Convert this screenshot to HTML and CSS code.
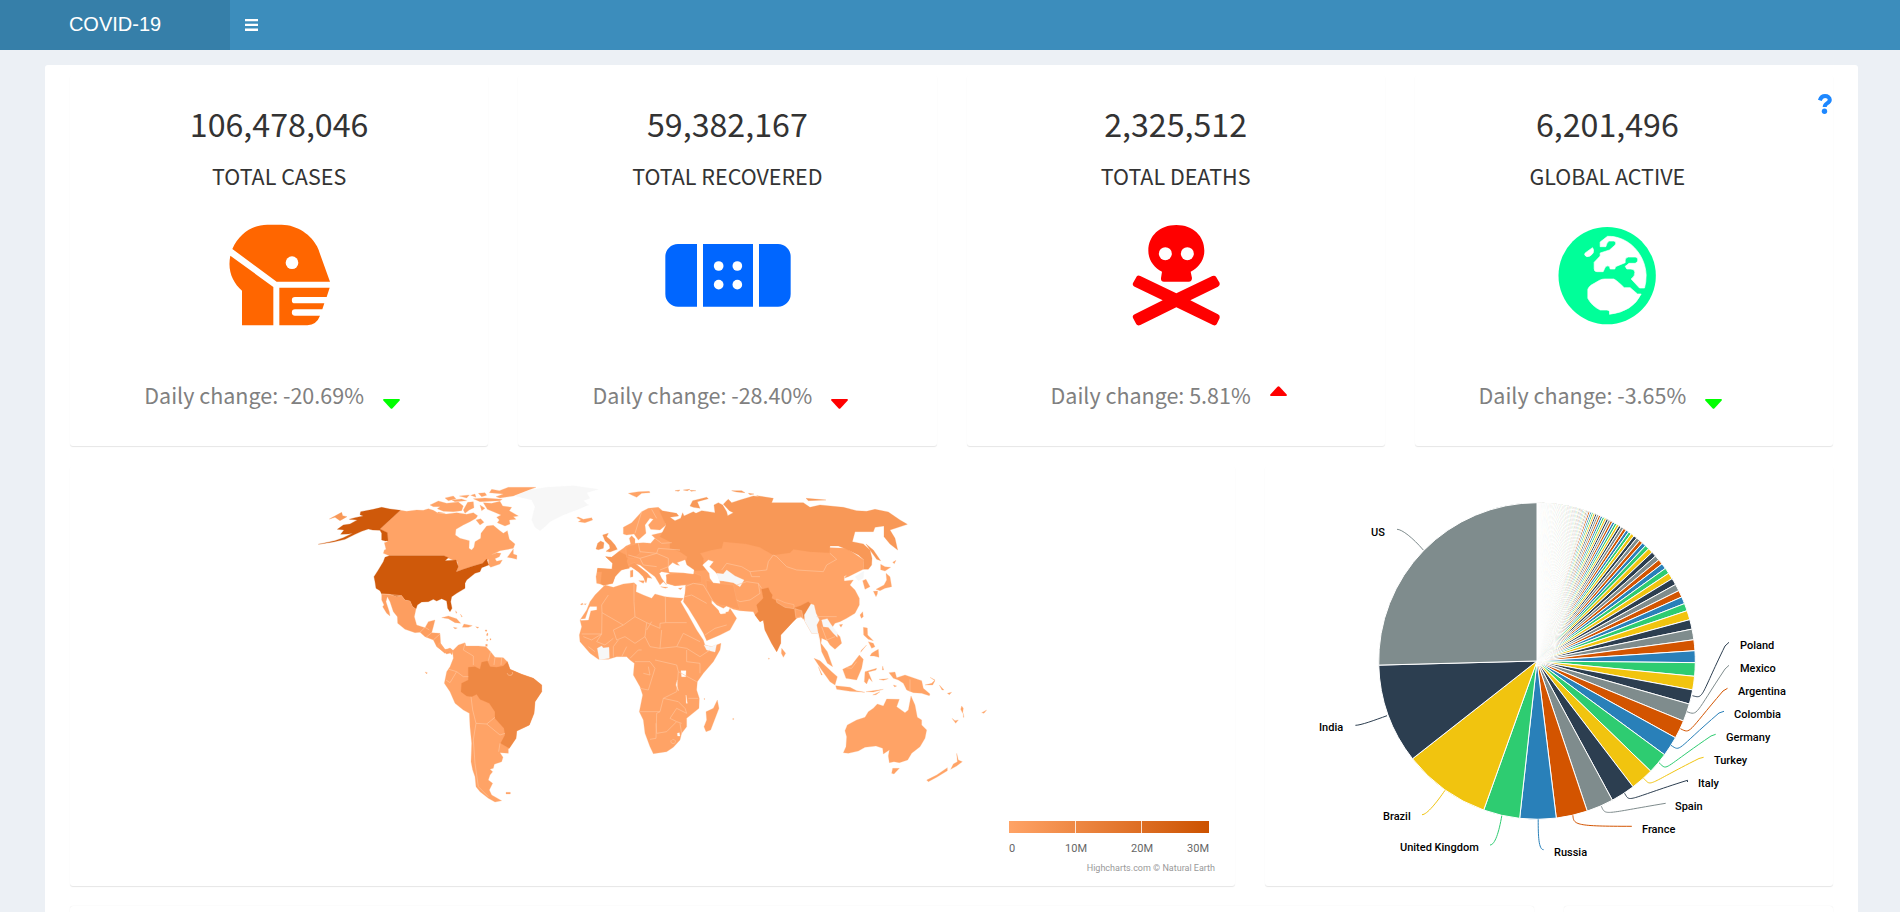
FILE: index.html
```html
<!DOCTYPE html>
<html lang="en">
<head>
<meta charset="utf-8">
<title>COVID-19</title>
<link rel="stylesheet" href="styles.css">
</head>
<body>
<header class="topbar">
  <div class="brand">COVID-19</div>
  <nav class="navbar"><svg class="menu" width="13" height="12" viewBox="0 0 13 12"><path d="M0 0h13v2.300H0zM0 4.800h13v2.300H0zM0 9.600h13v2.300H0z"/></svg></nav>
</header>
<main class="panel">
  <section class="stats">
    <article class="card stat">
      <div class="stat-body">
        <div class="value">106,478,046</div>
        <div class="label">TOTAL CASES</div>
        <svg class="icon" viewBox="645 634 384 384" fill="#f60">
          <path d="M697 748C718 702 756 676 802 675H845C892 675 936 708 951 740Q956 750 959 760L990 846H830z"/>
          <path d="M691 768L820 862V977H726V873C697 847 682 812 691 768z"/>
          <path d="M838 864H989L980 892H885a9.500 9.500 0 0 0 0 19H973L967 929H885a9.500 9.500 0 0 0 0 19H960Q950 975 922 977H838z"/>
          <circle cx="876" cy="789" r="19" fill="#fff"/>
        </svg>
        <div class="change">Daily change: -20.69%<svg class="caret down" viewBox="0 0 17 10" fill="#0f0"><path d="M1 0h15q1.500.5.5 1.700L9.500 9.300q-1 1-2 0L.5 1.700Q-.5.5 1 0z"/></svg></div>
      </div>
    </article>
    <article class="card stat">
      <div class="stat-body">
        <div class="value">59,382,167</div>
        <div class="label">TOTAL RECOVERED</div>
        <svg class="icon" viewBox="489 453 384 384" fill="#06f">
          <path d="M534 552h57v188h-57a38 38 0 0 1-38-38V590a38 38 0 0 1 38-38zM609 552h150v188H609zM777 552h57a38 38 0 0 1 38 38v112a38 38 0 0 1-38 38h-57z"/>
          <g fill="#fff"><circle cx="656" cy="618" r="14.500"/><circle cx="712" cy="618" r="14.500"/><circle cx="656" cy="674" r="14.500"/><circle cx="712" cy="674" r="14.500"/></g>
        </svg>
        <div class="change">Daily change: -28.40%<svg class="caret down" viewBox="0 0 17 10" fill="red"><path d="M1 0h15q1.500.5.5 1.700L9.500 9.300q-1 1-2 0L.5 1.700Q-.5.5 1 0z"/></svg></div>
      </div>
    </article>
    <article class="card stat">
      <div class="stat-body">
        <div class="value">2,325,512</div>
        <div class="label">TOTAL DEATHS</div>
        <svg class="icon" viewBox="455 453 384 384" fill="red">
          <path d="M648 495C698 495 732 528 732 572C732 600 716 622 691 635L695 654Q695 665 685 665H611Q601 665 602 654L605 635C580 622 564 600 564 572C564 528 598 495 648 495z"/>
          <path d="M530 648Q534 645 540 648L648 700L756 648Q763 645 767 650L778 669Q780 676 773 680L690 721L773 763Q780 767 778 774L769 793Q765 798 758 795L648 742L540 795Q532 798 528 793L518 774Q515 767 523 763L607 721L523 680Q515 676 518 669z"/>
          <g fill="#fff"><circle cx="615" cy="581" r="19.500"/><circle cx="681" cy="581" r="19.500"/></g>
        </svg>
        <div class="change">Daily change: 5.81%<svg class="caret up" viewBox="0 0 17 10" fill="red"><path d="M1 10h15q1.500-.5.5-1.700L9.500.7q-1-1-2 0L.5 8.300Q-.5 9.500 1 10z"/></svg></div>
      </div>
    </article>
    <article class="card stat">
      <div class="stat-body">
        <div class="value">6,201,496</div>
        <div class="label">GLOBAL ACTIVE</div>
        <svg class="icon" viewBox="428.500 453 384 384" fill="#0f9">
          <circle cx="621" cy="647" r="146"/>
          <path fill="#fff" stroke="#fff" stroke-width="2" stroke-linejoin="round" d="M613 657H641Q652 663 672 683H690L712 702H723Q698 755 628 763V755Q626 749 618 750H600Q575 738 563 715V688Q564 683 572 676L598 661Q606 657 613 657zM622 529C683 527 735 580 738 645Q738 667 733 684H718L693 657Q705 648 704 637Q703 627 690 627H680L675 619Q682 615 686 610H705Q713 608 713 600Q713 591 705 591H685Q676 592 675 600V608L646 620L644 627H630L628 619Q620 615 615 622L609 635H590Q582 635 582 626V607L600 588V579L628 570L645 555Q650 544 640 543H628Q620 545 617 560H600V546zM577 563Q582 568 579 579Q570 592 560 590Q550 586 555 579z"/>
        </svg>
        <div class="change">Daily change: -3.65%<svg class="caret down" viewBox="0 0 17 10" fill="#0f0"><path d="M1 0h15q1.500.5.5 1.700L9.500 9.300q-1 1-2 0L.5 1.700Q-.5.5 1 0z"/></svg></div>
      </div>
      <svg class="help" viewBox="0 0 14 20"><path d="M1.800 6.300C2.800 3.500 4.500 2.100 7 2.100c2.700 0 4.800 1.300 4.800 3.700 0 3.700-5.100 3-5.100 7.100" fill="none" stroke="#1e88ff" stroke-width="4"/><circle cx="6.500" cy="17.300" r="2.700" fill="#1e88ff"/></svg>
    </article>
  </section>
  <section class="charts">
    <article class="card">
      <svg class="chart" viewBox="70 466 1165 420">
        <defs><linearGradient id="scale"><stop offset="0" stop-color="#ffa366"/><stop offset="1" stop-color="#cc5200"/></linearGradient></defs>
        <!-- North America -->
        <g class="land" transform="translate(300 470) scale(.33333)">
          <path d="M301 121L320 124 350 120 370 121 385 116 400 121 415 130 440 132 470 128 500 133 520 128 533 137 528 145 510 155 490 165 468 178 466 195 480 205 508 212 507 235 515 240 522 232 525 215 542 205 543 190 560 168 580 166 597 180 610 190 622 182 628 208 645 222 640 235 600 242 575 254 590 248 603 250 598 260 585 266 590 274 607 270 600 282 572 292 566 285 565 268 548 280 520 288 490 298 468 306 475 290 472 275 445 265 432 257 268 257 250 250 253 240 258 238 253 218 262 215 262 190 240 177z"/>
          <path d="M708 52L625 52 598 62 575 58 568 68 610 72 588 80 600 84 640 78zM550 98L575 100 600 94 608 108 635 112 628 122 655 138 640 140 648 148 628 150 630 162 615 168 592 158 598 150 590 142 603 135 580 125 562 118zM390 105L415 93 440 100 475 96 490 108 485 122 460 125 430 124 412 116 420 110 400 110zM435 84L460 78 468 86 445 92zM478 78L508 75 500 84zM520 86L555 84 607 88 600 92 540 95zM503 97L520 95 522 113 508 120 495 130 490 120zM535 70L555 68 560 76 545 80zM455 90L485 87 500 92 465 95zM528 150L542 146 552 157 540 165zM622 262L640 237 640 252 651 256 650 268 635 264zM415 126L435 130 410 131zM540 105L555 115 545 122zM512 76L525 72 528 82z"/>
          <path class="us" d="M301 121L270 117 245 112 220 118 182 125 180 134 190 138 165 143 148 148 172 150 150 162 130 165 112 178 132 180 122 193 145 192 158 190 130 203 105 212 78 218 55 223 100 216 135 208 165 193 185 184 205 177 218 180 240 181 245 190 245 210 256 213 264 212 262 188 240 177z"/>
          <path class="us" d="M268 257L432 257 445 263 435 272 468 270 475 290 468 306 490 298 520 288 548 280 560 267 566 285 545 293 540 305 525 310 500 330 495 340 495 355 470 370 455 380 452 395 456 415 450 425 443 415 440 393 425 386 410 393 400 388 385 395 365 396 352 405 348 417 338 410 330 393 315 390 305 377 290 380 265 372 245 372 240 362 228 355 225 335 222 320 235 300 250 275 255 262z"/>
          <path class="mid" d="M88 147L125 127 128 137 141 140 120 152 105 142z"/>
          <path class="low" d="M245 372L265 372 290 380 305 377 315 390 330 393 338 410 348 417 343 440 350 465 375 473 385 455 405 450 400 470 395 488 420 490 422 520 435 538 452 536 460 543 455 548 440 552 410 530 400 510 375 500 360 487 345 488 315 478 293 460 292 440 280 425 270 395 262 380 258 395 268 425 270 438 260 430 248 410 252 405 245 390z"/>
          <path d="M425 443L445 438 470 446 482 460 465 458 445 446zM492 462L517 467 505 472 487 472zM460 472L472 474 465 477zM527 470L537 472 532 475zM467 422l4 6-3 2zM481 432l6 8-2 1zM556 480h4v3h-4zM560 492h3v5h-3zM560 508h3v4h-3zM557 523h5v6h-5zM830 143L835 141 850 148 875 143 878 150 855 158 835 155 843 150z"/>
          <path class="none" d="M645 78L690 60 740 52 820 47 895 58 860 68 870 85 850 92 865 105 835 118 790 135 770 145 750 155 735 170 720 182 705 172 695 150 700 130 705 110 695 90z"/>
          <path class="edge" d="M360 487L375 472 388 480M395 488L378 502M400 510L420 492M245 372L305 377"/>
        </g>
        <!-- South America and Africa -->
        <g class="land" transform="translate(400 630) scale(.33333)">
          <path d="M118 38L135 60 150 54 160 62 156 75 145 62 134 70 112 50z"/>
          <path d="M158 62L175 45 195 38 198 48 235 48 258 50 272 65 285 82 310 83 322 95 330 118 365 133 400 145 425 165 425 185 405 215 402 250 388 285 350 303 348 325 325 358 325 370 300 368 309 382 305 395 283 403 280 415 270 418 278 425 270 435 265 450 278 460 268 480 275 495 305 512 285 516 265 505 240 485 228 470 225 440 218 420 213 395 215 340 210 290 208 250 190 240 165 220 150 185 133 160 140 125 150 110 160 85z"/>
          <path class="high" d="M322 95L330 118 365 133 400 145 425 165 425 185 405 215 402 250 388 285 350 303 348 325 328 355 302 340 315 315 312 295 285 265 285 245 268 220 240 208 230 193 215 200 200 198 183 185 185 160 205 150 205 112 225 110 240 118 245 97 262 93 270 110 290 112 310 108z"/>
          <path class="edge" d="M195 40L190 60 220 78 220 105M272 65L265 92M285 82L282 105M305 84L303 105M147 118L170 125 190 140 205 140M170 125L150 158 138 150M213 200L218 240 228 280 260 282 285 262M260 282L300 315 315 310M228 280L220 330 225 400 235 470 265 500M300 340L296 365M322 130a8 6 0 1 0 14-4"/>
          <path d="M318 487h13v5h-13zM75 126l7 2-2 4zM257 0h3v4h-3zM261 10h3v4h-3zM270 26h3v4h-3z"/>
          <path d="M615 -135L640 -128 670 -138 702 -142 710 -135 708 -115 730 -105 755 -95 765 -108 795 -100 825 -97 850 -95 842 -85 865 -45 890 0 910 30 915 45 935 50 963 40 960 60 940 95 910 130 892 155 890 180 898 205 897 235 860 265 860 290 845 310 840 330 820 352 800 365 760 371 750 350 735 310 730 270 718 245 728 195 720 170 700 135 703 100 690 90 680 80 650 80 625 88 595 88 570 70 540 35 538 15 545 -10 540 -30 560 -60 570 -85 585 -105z"/>
          <path class="none" d="M592 55L605 48 610 54 627 52 628 85 598 89z"/>
          <path class="none" d="M912 45L935 50 950 42 945 66 920 60z"/>
          <path class="sea" d="M566 -62L570 -70 590 -70 590 -61 572 -58 565 -30 542 -29 542 -32 556 -34zM843 122L858 122 857 140 845 140zM832 150L828 165 835 182 832 170zM858 195L862 220 859 220zM832 310L838 308 840 318 833 318z"/>
          <path class="edge" d="M625 -105L605 -75 606 -52 670 -15 705 -40 702 -85 702 -140M606 -52L605 12 545 12M705 -40L740 -22 780 -5 780 -20 797 -22 796 -100M797 -22L860 -22M740 -22L735 20 705 40 675 20 650 30 640 0 670 -15M735 20L750 50 780 55 830 50 860 55 900 80 930 60M780 55L785 0M640 80L640 50 655 30M690 85L715 60 725 60M565 50L585 65M605 12L590 35 615 45 640 25M605 12L575 30 550 20M830 50L850 10 900 35M705 95L750 95 765 115 745 180 720 175M765 90L830 105 835 125 830 185 790 205 780 245 720 245M835 125L890 155M860 60L860 95 900 100 900 130M780 245L770 250 768 325 750 328M768 280L770 310 800 305 830 275 845 280M790 205L835 215 855 235 860 250 830 235 810 265 830 275M865 205L895 205M840 280L845 310M730 130L750 135 745 110M815 330a7 6 0 1 0 2-1M740 0L755 -25M680 50L665 80"/>
          <path d="M952 210L957 235 932 300 918 305 912 290 920 270 918 245 940 235zM997 267l4-2v4zM912 205l3 2-2 2zM542 -78l6-2 2 3-7 2zM552 -78l7-1-2 3z"/>
        </g>
        <!-- Eurasia -->
        <g class="land" transform="translate(560 470) scale(.33333)">
          <path d="M110 340L108 320 113 295 155 297 158 280 137 260 155 262 175 245 190 235 198 228 212 222 208 205 215 197 225 207 225 220 250 218 272 220 285 205 275 195 310 187 600 225 860 235 912 270 910 298 895 305 865 320 852 325 860 315 852 320 853 333 880 330 870 345 885 360 898 385 898 405 885 430 860 445 840 455 825 460 815 475 840 500 845 520 825 538 810 525 802 512 785 505 783 520 802 545 818 590 802 580 785 545 780 510 775 490 755 490 735 455 730 440 705 445 690 465 662 495 662 520 650 545 635 520 615 480 610 450 600 455 585 435 580 425 540 422 520 418 500 408 490 415 470 405 455 390 455 400 475 420 480 430 505 425 510 415 530 445 510 480 480 495 440 512 430 490 410 455 385 415 370 395 375 370 377 345 345 347 320 340 320 325 318 315 330 310 305 305 298 310 305 325 320 345 310 335 300 345 285 320 265 305 240 285 228 283 262 310 275 325 262 322 258 338 250 320 235 305 215 290 185 300 165 320 158 340 130 346 120 342z"/>
          <path d="M190 192L190 172 215 158 245 125 265 115 295 112 305 120 318 165 300 180 272 178 265 165 280 148 270 145 255 165 258 190 235 210 222 192 200 195z"/>
          <path class="mid" d="M298 121L350 130 356 138 330 142 345 152 362 145 368 128 372 138 400 125 408 130 425 122 465 128 462 105 475 98 488 105 500 125 503 137 520 128 508 122 490 103 500 92 505 88 515 98 540 90 580 78 600 80 590 77 640 85 635 98 730 98 750 112 780 105 850 112 890 122 920 124 945 118 985 126 1020 150 1042 163 1015 172 990 180 1005 205 1013 240 990 222 972 200 972 168 945 172 940 185 885 185 877 215 910 222 930 240 936 265 935 285 925 298 910 298 912 270 895 255 860 238 835 228 810 228 808 248 750 245 700 238 690 248 640 255 600 232 560 222 540 220 490 215 485 235 455 240 420 250 430 265 430 285 438 300 400 303 375 285 382 260 360 245 330 235 330 215 300 200 308 185 318 165z"/>
          <path class="mid" d="M390 108L398 92 440 82 445 86 412 95 420 115 400 112zM515 62L545 62 555 68 530 66zM565 70L582 72 570 74zM345 62l15-2-5 4zM370 60l20-2-8 4zM390 61l18 1-15 2zM738 85L775 88 798 90 745 92zM918 222L940 240 962 272 950 268 930 240z"/>
          <path d="M205 70L235 65 268 64 270 68 245 70 230 82 215 75zM998 277l10-6-5 10z"/>
          <path class="mid" d="M128 195L145 190 140 200 152 210 165 225 172 238 150 246 138 244 150 235 148 225 135 212zM108 237L113 220 122 213 132 218 130 235 115 239zM137 260L155 262 178 245 204 258 200 275 208 295 180 300 158 297 158 280zM113 295L180 300 165 320 158 340 130 346 122 340 126 305 112 305z"/>
          <path class="low" d="M198 235L205 228 235 220 240 250 220 265 200 262zM205 285L225 277 228 283 262 310 275 325 262 322 258 338 250 320 235 305zM320 315L345 310 400 308 425 318 425 338 345 347 320 340zM438 330L470 340 520 345 530 390 540 420 500 408 480 405 455 390 440 355z"/>
          <path class="sea" d="M328 306L325 290 338 278 350 285 360 287 352 278 375 270 380 285 402 300 400 312 370 308zM428 285L445 270 460 275 448 290 465 305 475 318 480 340 460 338 450 325 448 310z"/>
          <path class="none" d="M470 310L490 312 500 300 525 318 552 330 540 350 520 338 490 333 478 332z"/>
          <path d="M236 332l18 0-4 8zM211 302l8-2 0 20-8 2zM302 350l22 2-8 3zM355 355l12-2-6 6z"/>
          <path class="high" d="M605 358L625 353 630 365 637 375 635 385 650 393 675 408 702 414 722 407 745 395 753 403 740 422 735 440 730 448 725 425 705 415 710 445 690 465 662 495 662 520 650 545 635 520 615 480 610 450 600 455 585 435 595 425 590 405 610 385z"/>
          <path class="border" d="M650 387L675 398 702 404 702 416 675 412 650 397zM704 416L725 422 730 447 722 440 708 445z"/>
          <path class="none" d="M753 402L762 405 768 430 778 450 770 465 778 510 772 490 755 490 735 455 733 435zM785 450L802 446 812 462 832 488 832 502 820 490 805 472 790 470zM885 320L912 303 910 325 895 332z"/>
          <path class="sea" d="M478 425L495 420 497 430 482 432z"/>
          <path d="M908 332L918 328 930 350 915 358zM978 310L990 320 995 350 975 355 960 362 948 358 972 345 980 330zM962 283L975 290 992 292 975 303 962 299zM940 364L953 363 952 372 948 380zM908 425L910 440 904 445 900 435zM838 464L848 463 843 472zM665 535L677 550 670 562 664 550zM910 472L922 474 923 495 940 512 925 508 911 495zM925 515L940 520 945 530 935 535zM942 545L955 538 957 562 942 558 930 558 935 550zM920 525l-18 22 2-6zM625 564l4 2-3 2z"/>
          <path class="edge" d="M640 255L625 275 620 300 570 305 545 290 500 280 485 300M640 255L650 260 680 290 710 300 790 305 800 285 830 268 810 250M570 305L575 320 600 320M530 345L560 335 595 340 605 355M595 340L600 370 570 390 540 395 530 390M235 220L240 245 290 250M285 205L305 220 335 218M290 250L295 235 360 240M290 250L325 265 325 290 300 300M205 255L240 265 290 250M240 265L250 285 290 290M245 125L225 190M275 118L290 145M375 350L400 340 430 345 460 395M375 380L395 375 440 400M435 495L465 475 500 465M770 440L830 440M785 470L800 510 825 500"/>
        </g>
        <!-- Oceania -->
        <g class="land" transform="translate(740 630) scale(.33333)">
          <path d="M222 85L240 92 275 125 292 140 285 165 270 155 245 120zM287 167L330 172 350 182 375 187 330 184 290 178zM308 118L335 105 358 75 370 88 365 115 350 150 318 145zM375 125L410 115 408 120 385 126 397 155 387 145 380 162 373 155zM447 128L465 126 470 143 495 135 545 152 550 175 570 192 568 197 545 190 520 188 500 180 490 160 475 150 460 145zM378 185L430 178 400 186zM398 195L420 185 408 194zM417 148L445 146 430 151zM428 108l3 12 -4 0zM555 165L575 160 585 150 570 142 585 152 578 165zM598 165L612 180 606 180zM622 190L635 187 628 194zM665 228L670 235 668 250 662 238zM670 250l2 12-2 0zM636 265L645 272 655 270 647 280zM725 248L740 240 732 250zM235 110l12 25-3 0zM460 165l10 3-6 3z"/>
          <path d="M310 368L318 350 320 320 315 302 322 285 350 270 375 262 385 245 400 235 412 222 430 228 440 207 478 208 470 230 495 248 505 240 513 198 525 225 532 262 545 270 545 285 560 300 555 325 540 350 515 370 503 390 478 398 462 395 448 398 445 378 448 360 430 372 428 355 408 348 375 352 355 363 325 370zM458 415L478 415 462 432 455 430zM650 370L655 390 667 395 650 408 632 418 640 402 652 395zM560 450L590 435 622 413 622 422 590 442 565 455z"/>
          <path class="edge" d="M510 148V185M318 113L335 115 350 95"/>
        </g>
        <rect x="1009" y="821" width="200" height="12" fill="url(#scale)"/>
        <path d="M1075.500 821v12M1141.500 821v12" stroke="#fff" stroke-opacity=".8"/>
        <g class="axis">
          <text x="1009" y="852">0</text>
          <text x="1076" y="852" text-anchor="middle">10M</text>
          <text x="1142" y="852" text-anchor="middle">20M</text>
          <text x="1209" y="852" text-anchor="end">30M</text>
        </g>
        <text class="credit" x="1215" y="871" text-anchor="end">Highcharts.com © Natural Earth</text>
      </svg>
    </article>
    <article class="card">
      <svg class="chart" viewBox="1265 466 568 420">
        <g id="slices" class="slices"></g>
        <g class="links">
          <path stroke="#7f8c8d" d="M1397 529.300C1402 529.300 1413 538 1423.300 550"/>
          <path stroke="#2c3e50" d="M1355.400 725.300C1361 725.300 1375 720 1387 715.700"/>
          <path stroke="#f1c40f" d="M1422 814.700C1427 814.700 1437 802 1445 790.300"/>
          <path stroke="#2ecc71" d="M1490 845C1495 845 1499 832 1501.800 815.700"/>
          <path stroke="#2980b9" d="M1543.600 849.700C1538.600 849.700 1538.200 836 1538.200 819.300"/>
          <path stroke="#d35400" d="M1572.900 815.300C1573.500 825 1576 826.300 1631.800 826.300"/>
          <path stroke="#7f8c8d" d="M1601.400 806.300C1605.500 816 1604 813.500 1665.700 803.300"/>
          <path stroke="#2c3e50" d="M1624.600 793.300C1630 802.500 1626 800 1682 782L1687.500 780.300V782"/>
          <path stroke="#f1c40f" d="M1643.600 778.300C1652 787 1646 785 1699 758.500L1703.600 757.300"/>
          <path stroke="#2ecc71" d="M1659 762.700C1668 771 1661 770 1711 736L1715.700 734.300"/>
          <path stroke="#2980b9" d="M1671 745.300C1681 752 1676 750 1719 713L1724 711.300"/>
          <path stroke="#d35400" d="M1680.400 728.700C1691 734 1687 733 1723 691L1727.500 688.300"/>
          <path stroke="#7f8c8d" d="M1687 711.700C1698 716 1695 714 1725 669L1729 665.300"/>
          <path stroke="#2c3e50" d="M1692.500 695.700C1704 699 1700 697 1725 646L1729 642.300"/>
        </g>
        <g class="names">
          <text x="1371" y="536">US</text><text x="1319" y="731">India</text><text x="1383" y="820">Brazil</text><text x="1400" y="851">United Kingdom</text><text x="1554" y="856">Russia</text><text x="1642" y="833">France</text><text x="1675" y="810">Spain</text><text x="1698" y="787">Italy</text><text x="1714" y="764">Turkey</text><text x="1726" y="741">Germany</text><text x="1734" y="718">Colombia</text><text x="1738" y="695">Argentina</text><text x="1740" y="672">Mexico</text><text x="1740" y="649">Poland</text>
        </g>
      </svg>
    </article>
  </section>
  <section class="tables"><article class="card"></article><article class="card"></article></section>
</main>
<script src="pie.js"></script>
</body>
</html>
```
FILE: styles.css
```css
* { box-sizing: border-box; }
body { display: flex; flex-direction: column; height: 100vh; margin: 0; background: #ecf0f5; overflow: hidden; font-family: "Noto Sans CJK SC", "Noto Sans", sans-serif; color: #333; }
.topbar { display: flex; flex: none; height: 50px; background: #3c8dbc; color: #fff; }
.brand { width: 230px; background: #367fa9; font: 20px/49px "Liberation Sans", Arial, sans-serif; text-align: center; }
.navbar { display: flex; align-items: center; padding-left: 15px; }
.menu { fill: #fff; }
.panel { flex: 1; min-height: 0; margin: 15px 42px 0 45px; padding: 10px 25px 0; background: #fff; border-radius: 3px 3px 0 0; overflow: hidden; }
.card { background: #fff; border-radius: 3px; box-shadow: 0 1px 1px rgba(0, 0, 0, .1); min-width: 0; }
.stats { display: grid; grid-template-columns: repeat(4, 1fr); gap: 30px; }
.stat { display: flex; height: 371px; }
.stat-body { flex: 1; display: flex; flex-direction: column; align-items: center; padding-top: 28px; }
.value { font-size: 32.2px; line-height: 40px; }
.label { margin-top: 18px; font-size: 21.5px; line-height: 30px; }
.icon { width: 128px; height: 128px; margin-top: 20px; }
.change { display: flex; margin-top: 41px; padding-right: 14px; font-size: 21.5px; line-height: 30px; color: #808080; }
.caret { width: 17px; height: 10px; margin-left: 19px; }
.caret.down { margin-top: 19px; }
.caret.up { margin-top: 6px; }
.help { width: 14px; height: 20px; margin: 19px 1px 0 18px; }
.charts { display: grid; grid-template-columns: 1165px 1fr; gap: 30px; margin-top: 20px; }
.chart { display: block; width: 100%; height: 420px; font-family: Roboto, sans-serif; }
.land { fill: #ffa366; stroke: #ffb585; stroke-width: .8; }
.land .us { fill: #cf590a; stroke: #cf590a; }
.land .high { fill: #ee8843; stroke: #ee8843; }
.land .mid { fill: #f89857; stroke: #f89857; }
.land .low { fill: #fd9e60; stroke: #ffb585; }
.land .border { stroke: #ffc49c; stroke-width: 1.5; }
.land .none { fill: #f7f7f7; stroke: #f7f7f7; }
.land .sea { fill: #fff; stroke: #fff; }
.land .edge { fill: none; stroke: #ffc49c; stroke-width: 2; }
.axis { font-size: 11px; fill: #666; }
.credit { font-size: 9px; fill: #999; }
.slices path { stroke: #fff; stroke-width: 1; stroke-linejoin: round; }
.links { fill: none; stroke-width: 1; }
.names { font-size: 11px; font-weight: 500; fill: #000; }
.tables { display: grid; grid-template-columns: 1464px 1fr; gap: 30px; margin-top: 20px; }
.tables .card { height: 24px; box-shadow: 0 0 1px rgba(0, 0, 0, .12); }
```
FILE: pie.js
```js
// Confirmed cases in millions, largest first; the remaining countries form a shrinking tail.
const cases = [27.06, 10.84, 9.52, 3.96, 3.93, 3.4, 2.94, 2.64, 2.53, 2.3, 2.16, 1.98, 1.93, 1.55, 1.476, 1.466,
  1.28, 1.18, 1.157, 1.04, 1, 0.81, 0.765, 0.75, 0.745, 0.725, 0.69, 0.627, 0.6, 0.555, 0.538, 0.538, 0.53, 0.475,
  0.425, 0.41, 0.405, 0.375, 0.37, 0.335, 0.33, 0.327, 0.318, 0.27, 0.26, 0.26, 0.26, 0.256, 0.245, 0.235, 0.231,
  0.228, 0.224, 0.223, 0.217, 0.203, 0.2, 0.196, 0.19, 0.187];
const colors = ['#7f8c8d', '#2c3e50', '#f1c40f', '#2ecc71', '#2980b9', '#d35400'];
const total = 106.478;
const rest = total - cases.reduce((a, b) => a + b, 0);
const weights = Array.from({ length: 130 }, (_, i) => Math.pow(1 - i / 130, 2.2));
const weightSum = weights.reduce((a, b) => a + b, 0);
weights.forEach(w => cases.push(rest * w / weightSum));

const cx = 1537, cy = 661, r = 158.3;
const point = a => `${(cx + r * Math.sin(a)).toFixed(2)} ${(cy - r * Math.cos(a)).toFixed(2)}`;
let end = 2 * Math.PI;
let markup = '';
cases.forEach((value, i) => {
  const start = end - value / total * 2 * Math.PI;
  markup = `<path fill="${colors[i % 6]}" d="M${cx} ${cy}L${point(start)}A${r} ${r} 0 0 1 ${point(end)}z"/>` + markup;
  end = start;
});
document.getElementById('slices').innerHTML = markup;
```
